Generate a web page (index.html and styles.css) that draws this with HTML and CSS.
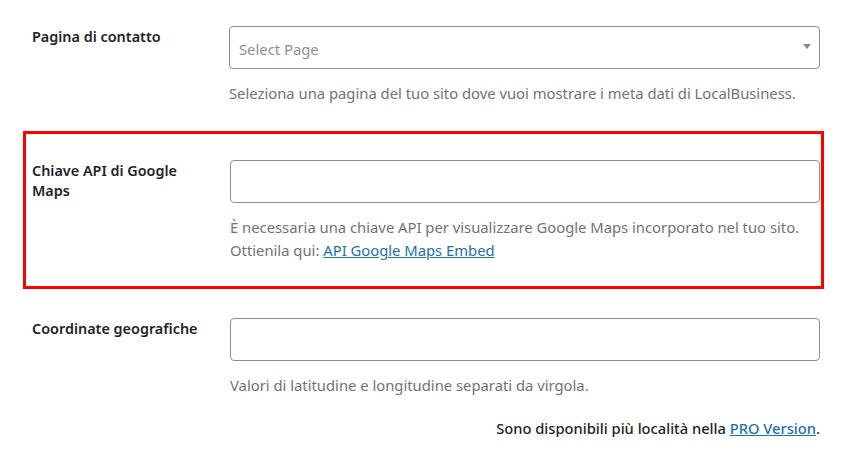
FILE: index.html
```html
<!DOCTYPE html>
<html lang="it">
<head>
<meta charset="utf-8">
<title>Impostazioni</title>
<link rel="stylesheet" href="styles.css">
</head>
<body>
<div class="page">
  <div class="row row-first">
    <div class="label">Pagina di contatto</div>
    <div class="field">
      <div class="select">
        <span class="select-text">Select Page</span>
        <span class="arrow"></span>
      </div>
      <p class="desc">Seleziona una pagina del tuo sito dove vuoi mostrare i meta dati di LocalBusiness.</p>
    </div>
  </div>
  <div class="row row-highlight">
    <div class="label">Chiave API di Google Maps</div>
    <div class="field">
      <div class="input"></div>
      <p class="desc">È necessaria una chiave API per visualizzare Google Maps incorporato nel tuo sito.<br>Ottienila qui: <a href="#">API Google Maps Embed</a></p>
    </div>
  </div>
  <div class="row row-last">
    <div class="label">Coordinate geografiche</div>
    <div class="field">
      <div class="input"></div>
      <p class="desc">Valori di latitudine e longitudine separati da virgola.</p>
    </div>
  </div>
  <p class="footer">Sono disponibili più località nella <a href="#">PRO Version</a>.</p>
</div>
</body>
</html>
```
FILE: styles.css
```css
html, body {
  margin: 0;
  padding: 0;
  background: #ffffff;
}
body {
  font-family: "Noto Sans", "Open Sans", sans-serif;
  font-size: 14px;
  color: #1d2327;
}
.page {
  width: 851px;
  padding-top: 26px;
}
.row {
  display: flex;
  align-items: flex-start;
}
.row-first {
  padding-left: 32px;
  width: 788px;
}
.row-highlight {
  margin: 26px 0 0 23px;
  border: 3px solid #ff0000;
  padding: 26px 1px 24px 6px;
  width: 788px;
}
.row-last {
  margin-top: 29px;
  padding-left: 32px;
  width: 788px;
}
.label {
  width: 170px;
  margin-right: 28px;
  flex: none;
  font-size: 14.4px;
  font-weight: 600;
  line-height: 20px;
  padding-top: 1px;
}
.row-first .label {
  margin-right: 27px;
}
.field {
  flex: 1;
}
.select, .input {
  box-sizing: border-box;
  height: 43px;
  border: 1px solid #8c8f94;
  border-radius: 4px;
  background: #ffffff;
}
.select {
  display: flex;
  align-items: center;
  justify-content: space-between;
  padding: 2px 8px 0 9px;
}
.select-text {
  color: #8c8f94;
  font-size: 14.8px;
}
.arrow {
  width: 0;
  height: 0;
  border-left: 4px solid transparent;
  border-right: 4px solid transparent;
  border-top: 5px solid #888888;
  margin-top: -5px;
}
.desc {
  margin: 13px 0 0;
  font-size: 14.8px;
  line-height: 23px;
  color: #6f7378;
}
a {
  color: #2271b1;
  text-decoration: underline;
}
.footer {
  margin: 20px 0 0;
  width: 820px;
  text-align: right;
  font-size: 14.7px;
  line-height: 23px;
  font-weight: 500;
}
```
